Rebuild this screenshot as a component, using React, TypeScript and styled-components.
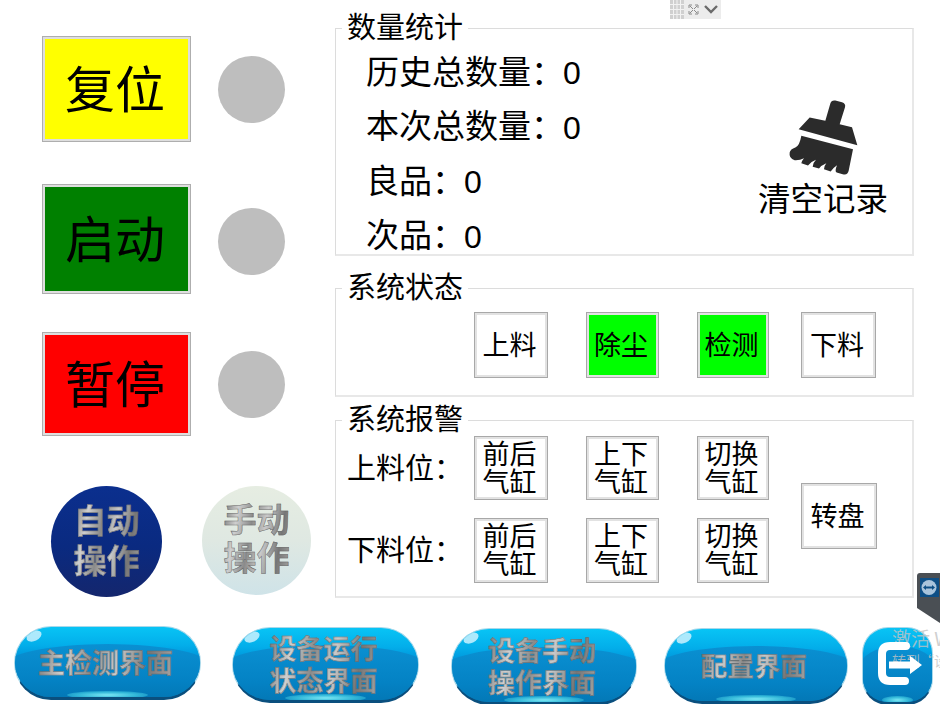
import React from "react";
import styled, { createGlobalStyle } from "styled-components";

const Global = createGlobalStyle`
  html, body { margin: 0; padding: 0; background: #fff; }
  body { font-family: "Noto Sans CJK SC", "Liberation Sans", sans-serif; color: #000; }
`;

const Screen = styled.div`
  position: relative;
  width: 940px;
  height: 704px;
  overflow: hidden;
  background: #fff;
`;
const Main = styled.div`
  display: flex;
  height: 626px;
`;
const LeftColumn = styled.div`
  width: 335px;
  flex: none;
  padding: 36px 0 0 42px;
  box-sizing: border-box;
`;
const ControlRow = styled.div<{ $mt: number }>`
  display: flex;
  align-items: center;
  gap: 27px;
  margin-top: ${(p) => p.$mt}px;
`;
const ControlButton = styled.div<{ $bg: string; $h: number }>`
  width: 149px;
  height: ${(p) => p.$h}px;
  box-sizing: border-box;
  border: 1px solid #aeaeae;
  box-shadow: inset 0 0 0 2px #dedede;
  background: ${(p) => p.$bg};
  display: flex;
  align-items: center;
  justify-content: center;
  padding: 0 3px 6px 0;
  font-size: 50px;
  line-height: 1;
`;
const Lamp = styled.div<{ $shift: number }>`
  width: 67px;
  height: 67px;
  border-radius: 50%;
  background: #bebebe;
  margin-top: ${(p) => p.$shift}px;
`;
const ModeRow = styled.div`
  display: flex;
  align-items: flex-start;
  gap: 40px;
  margin: 50px 0 0 9px;
`;
const MetalText = styled.span<{ $size: number; $lh: number }>`
  display: block;
  font-size: ${(p) => p.$size}px;
  line-height: ${(p) => p.$lh}px;
  font-weight: 700;
  text-align: center;
  white-space: nowrap;
  color: transparent;
  background: linear-gradient(100deg, #747474 0%, #cfcfcf 20%, #8a8a8a 40%, #c9c9c9 58%, #767676 80%, #a5a5a5 100%);
  -webkit-background-clip: text;
  background-clip: text;
  -webkit-text-stroke: 0.5px rgba(95, 95, 95, 0.85);
`;
const ModeDisc = styled.div<{ $size: number; $bg: string; $lift: number }>`
  width: ${(p) => p.$size}px;
  height: ${(p) => p.$size}px;
  box-sizing: border-box;
  padding-bottom: ${(p) => p.$lift}px;
  border-radius: 50%;
  background: ${(p) => p.$bg};
  display: flex;
  align-items: center;
  justify-content: center;
  flex: none;
`;
const RightColumn = styled.div`
  width: 578px;
  padding-top: 10px;
`;
const Panel = styled.fieldset<{ $h: number; $mt: number }>`
  box-sizing: border-box;
  width: 579px;
  height: ${(p) => p.$h}px;
  margin: ${(p) => p.$mt}px 0 0;
  padding: 0;
  border: 1px solid #dcdcdc;
  border-bottom-width: 2px;
  border-right-width: 2px;
  border-bottom-color: #e8e8e8;
  border-right-color: #e8e8e8;
  min-width: 0;
`;
const PanelTitle = styled.legend`
  margin-left: 6px;
  padding: 0 5px 6px;
  font-size: 29px;
  line-height: 30px;
  white-space: nowrap;
`;
const StatsBody = styled.div`
  display: flex;
  justify-content: space-between;
`;
const StatList = styled.div`
  padding-left: 30px;
`;
const StatRow = styled.div`
  height: 54.5px;
  box-sizing: border-box;
  padding-bottom: 6px;
  display: flex;
  align-items: center;
  font-size: 33px;
  line-height: 1;
  white-space: nowrap;
`;
const StatValue = styled.span`
  font-family: "Liberation Sans", sans-serif;
  font-size: 32px;
  margin: 6px 0 0 -1px;
`;
const ClearBlock = styled.div`
  display: flex;
  flex-direction: column;
  align-items: center;
  padding: 53px 24px 0 0;
`;
const ClearLabel = styled.div`
  font-size: 32.5px;
  line-height: 44px;
  margin-top: -1px;
  white-space: nowrap;
`;
const DeviceGrid = styled.div<{ $top: number }>`
  display: grid;
  grid-template-columns: 127px 112px 111px 104px auto;
  row-gap: 18px;
  padding-left: 11px;
  margin-top: ${(p) => p.$top}px;
  align-items: start;
`;
const DeviceButton = styled.div<{ $w: number; $h: number; $on?: boolean; $col?: number; $span?: boolean }>`
  width: ${(p) => p.$w}px;
  height: ${(p) => p.$h}px;
  box-sizing: border-box;
  border: 1px solid #a8a8a8;
  box-shadow: inset 0 0 0 2px #e2e2e2;
  background: ${(p) => (p.$on ? "#00ff00" : "#fff")};
  display: flex;
  align-items: center;
  justify-content: center;
  text-align: center;
  padding: 0 3px 3px 0;
  font-size: 27px;
  line-height: 28px;
  ${(p) => (p.$col ? `grid-column: ${p.$col};` : "")}
  ${(p) => (p.$span ? "grid-row: 1 / span 2; margin-top: 47px;" : "")}
`;
const RowLabel = styled.div`
  font-size: 29px;
  line-height: 60px;
  padding-bottom: 4px;
  white-space: nowrap;
`;
const Footer = styled.div`
  display: flex;
  align-items: flex-start;
  padding-left: 14px;
`;
const GlossPill = styled.div<{ $w: number; $h: number; $mt: number; $ml: number; $r?: number }>`
  position: relative;
  flex: none;
  width: ${(p) => p.$w}px;
  height: ${(p) => p.$h}px;
  margin: ${(p) => p.$mt}px 0 0 ${(p) => p.$ml}px;
  box-sizing: border-box;
  border-radius: ${(p) => p.$r ?? 38}px;
  overflow: hidden;
  border: 1px solid #a8d8ea;
  border-bottom: 3px solid #0a4f7e;
  background: linear-gradient(180deg, #08c4f5 0%, #03aeea 26%, #0097dc 42%, #0078b6 100%);
  display: flex;
  align-items: center;
  justify-content: center;
  &::before {
    content: "";
    position: absolute;
    left: -6%;
    right: -6%;
    top: 24%;
    height: 130%;
    border-radius: 50% 50% 0 0 / 24% 24% 0 0;
    background: linear-gradient(180deg, #0a90d2 0%, #0482c4 40%, #026ea8 78%);
  }
  &::after {
    content: "";
    position: absolute;
    left: 28%;
    right: 28%;
    bottom: -2px;
    height: 8px;
    border-radius: 50%;
    background: radial-gradient(ellipse at center, #7ce8f4 0%, rgba(70, 210, 230, 0.7) 50%, rgba(0, 130, 190, 0) 100%);
  }
`;
const PillShine = styled.span`
  position: absolute;
  z-index: 1;
  left: 11px;
  top: 4px;
  width: 16px;
  height: 10px;
  border-radius: 50%;
  transform: rotate(-25deg);
  background: rgba(215, 245, 255, 0.8);
`;
const PillContent = styled.div`
  position: relative;
  z-index: 1;
  margin-right: 4px;
`;
const IconContent = styled.div`
  position: relative;
  z-index: 1;
  display: flex;
  margin: -3px 0 0 5px;
`;
const Watermark = styled.div`
  position: absolute;
  left: 892px;
  top: 626px;
  color: rgba(195, 195, 195, 0.8);
  white-space: nowrap;
`;
const WatermarkTitle = styled.div`
  font-size: 19px;
  line-height: 24px;
`;
const WatermarkHint = styled.div`
  font-size: 14px;
  line-height: 18px;
  margin-top: 1px;
`;
const SideTab = styled.svg`
  position: absolute;
  left: 917px;
  top: 573px;
`;
const TopWidget = styled.div`
  position: absolute;
  left: 670px;
  top: 0;
  width: 51px;
  height: 19px;
  background: #ececec;
  display: flex;
  align-items: center;
`;

const Broom = () => (
  <svg width="70" height="77" viewBox="150 30 210 230">
    <path
      fill="#2b2b2b"
      d="M182 120 L215 85 L262 95 L277 43 Q280 32 292 34 L312 39 Q324 43 321 54 L305 105 L342 114 L358 168 Z"
    />
    <path
      fill="#2b2b2b"
      d="M190 140 L345 180 L332 245 Q329 259 314 255 L296 250 Q289 247 297 228 Q285 236 278 247 L258 240 Q258 230 265 222 Q250 228 243 238 L224 233 Q224 222 234 212 Q218 218 210 229 L190 222 Q191 215 198 207 Q185 214 170 213 Q152 208 155 190 Q157 180 172 175 Q185 170 190 140 Z"
    />
  </svg>
);

const ExitIcon = () => (
  <svg width="44" height="44" viewBox="0 0 44 44" fill="none">
    <path d="M28 4 H12 Q4 4 4 12 V31 Q4 39 12 39 H27" stroke="#fff" strokeWidth="8" strokeLinecap="round" />
    <path d="M11 19.5 H32 V14 L44 23 L32 32 V26.5 H11 Z" fill="#fff" />
  </svg>
);

const stats = [
  { label: "历史总数量：", value: "0" },
  { label: "本次总数量：", value: "0" },
  { label: "良品：", value: "0" },
  { label: "次品：", value: "0" },
];

export default function App() {
  return (
    <Screen>
      <Global />
      <Main>
        <LeftColumn>
          <ControlRow $mt={0}>
            <ControlButton $bg="#ffff00" $h={106}>复位</ControlButton>
            <Lamp $shift={1} />
          </ControlRow>
          <ControlRow $mt={42}>
            <ControlButton $bg="#008000" $h={110}>启动</ControlButton>
            <Lamp $shift={5} />
          </ControlRow>
          <ControlRow $mt={38}>
            <ControlButton $bg="#ff0000" $h={104}>暂停</ControlButton>
            <Lamp $shift={0} />
          </ControlRow>
          <ModeRow>
            <ModeDisc $size={111} $lift={5} $bg="linear-gradient(180deg,#0b2f8e 0%,#0a2a80 55%,#14266d 100%)">
              <MetalText $size={33} $lh={40}>自动<br />操作</MetalText>
            </ModeDisc>
            <ModeDisc $size={109} $lift={8} $bg="linear-gradient(180deg,#e6ede2 0%,#dfe8e2 50%,#cfe3e8 100%)">
              <MetalText $size={33} $lh={38}>手动<br />操作</MetalText>
            </ModeDisc>
          </ModeRow>
        </LeftColumn>
        <RightColumn>
          <Panel $h={246} $mt={0}>
            <PanelTitle>数量统计</PanelTitle>
            <StatsBody>
              <StatList>
                {stats.map((s) => (
                  <StatRow key={s.label}>
                    {s.label}
                    <StatValue>{s.value}</StatValue>
                  </StatRow>
                ))}
              </StatList>
              <ClearBlock>
                <Broom />
                <ClearLabel>清空记录</ClearLabel>
              </ClearBlock>
            </StatsBody>
          </Panel>
          <Panel $h={127} $mt={14}>
            <PanelTitle>系统状态</PanelTitle>
            <DeviceGrid $top={6}>
              <DeviceButton $w={74} $h={66} $col={2}>上料</DeviceButton>
              <DeviceButton $w={73} $h={66} $on>除尘</DeviceButton>
              <DeviceButton $w={72} $h={66} $on>检测</DeviceButton>
              <DeviceButton $w={75} $h={66}>下料</DeviceButton>
            </DeviceGrid>
          </Panel>
          <Panel $h={196} $mt={5}>
            <PanelTitle>系统报警</PanelTitle>
            <DeviceGrid $top={-2}>
              <RowLabel>上料位：</RowLabel>
              <DeviceButton $w={74} $h={64}>前后<br />气缸</DeviceButton>
              <DeviceButton $w={73} $h={64}>上下<br />气缸</DeviceButton>
              <DeviceButton $w={72} $h={64}>切换<br />气缸</DeviceButton>
              <DeviceButton $w={76} $h={66} $col={5} $span>转盘</DeviceButton>
              <RowLabel>下料位：</RowLabel>
              <DeviceButton $w={74} $h={65}>前后<br />气缸</DeviceButton>
              <DeviceButton $w={73} $h={65}>上下<br />气缸</DeviceButton>
              <DeviceButton $w={72} $h={65}>切换<br />气缸</DeviceButton>
            </DeviceGrid>
          </Panel>
        </RightColumn>
      </Main>
      <Footer>
        <GlossPill $w={187} $h={74} $mt={0} $ml={0}>
          <PillShine />
          <PillContent><MetalText $size={27} $lh={32}>主检测界面</MetalText></PillContent>
        </GlossPill>
        <GlossPill $w={187} $h={76} $mt={1} $ml={31}>
          <PillShine />
          <PillContent><MetalText $size={27} $lh={32}>设备运行<br />状态界面</MetalText></PillContent>
        </GlossPill>
        <GlossPill $w={186} $h={77} $mt={2} $ml={32}>
          <PillShine />
          <PillContent><MetalText $size={27} $lh={32}>设备手动<br />操作界面</MetalText></PillContent>
        </GlossPill>
        <GlossPill $w={184} $h={76} $mt={2} $ml={27}>
          <PillShine />
          <PillContent><MetalText $size={26.5} $lh={32}>配置界面</MetalText></PillContent>
        </GlossPill>
        <GlossPill $w={71} $h={78} $mt={1} $ml={14} $r={26}>
          <IconContent><ExitIcon /></IconContent>
        </GlossPill>
      </Footer>

      <Watermark>
        <WatermarkTitle>激活 W</WatermarkTitle>
        <WatermarkHint>转到“设置”以</WatermarkHint>
      </Watermark>

      <SideTab width="23" height="50" viewBox="0 0 23 50">
        <path d="M3 0 H23 V50 L0 35 V3 Q0 0 3 0 Z" fill="#4a4f54" />
        <rect x="3" y="5" width="19" height="19" fill="#0e4f86" />
        <circle cx="12" cy="14.5" r="7.5" fill="#a9c4dc" />
        <path d="M6 14.5 L9 12 V13.5 H15 V12 L18 14.5 L15 17 V15.5 H9 V17 Z" fill="#0e4f86" />
      </SideTab>

      <TopWidget>
        <svg width="51" height="19" viewBox="0 0 51 19" fill="none">
          <rect x="0" y="0" width="14" height="19" fill="#d0d0d0" />
          <path d="M0 4.5H14M0 9.5H14M0 14.5H14M3.5 0V19M7 0V19M10.5 0V19" stroke="#f2f2f2" strokeWidth="1" />
          <path d="M19 8V5H22M25 5H28V8M28 11V14H25M22 14H19V11M20 6L23 9M27 6L24 9M20 13L23 10M27 13L24 10" stroke="#8a8a8a" strokeWidth="1" />
          <path d="M35 6L41 12L47 6" stroke="#6a6a6a" strokeWidth="2.4" />
        </svg>
      </TopWidget>
    </Screen>
  );
}
